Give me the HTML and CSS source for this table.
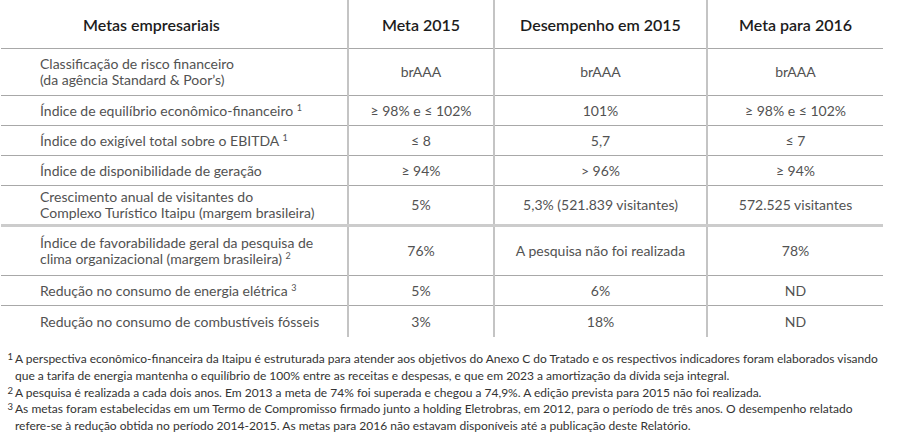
FILE: index.html
```html
<!DOCTYPE html>
<html lang="pt">
<head>
<meta charset="utf-8">
<link rel="stylesheet" href="styles.css">
</head>
<body>
<div class="page">
  <table class="goals">
    <colgroup>
      <col class="w1">
      <col class="w2">
      <col class="w3">
      <col class="w4">
    </colgroup>
    <thead>
      <tr>
        <th class="c1">Metas empresariais</th>
        <th>Meta 2015</th>
        <th>Desempenho em 2015</th>
        <th>Meta para 2016</th>
      </tr>
    </thead>
    <tbody>
      <tr class="tall">
        <td>Classificação de risco financeiro<br>(da agência Standard &amp; Poor’s)</td>
        <td>brAAA</td>
        <td>brAAA</td>
        <td>brAAA</td>
      </tr>
      <tr>
        <td>Índice de equilíbrio econômico-financeiro <sup>1</sup></td>
        <td>≥ 98% e ≤ 102%</td>
        <td>101%</td>
        <td>≥ 98% e ≤ 102%</td>
      </tr>
      <tr>
        <td>Índice do exigível total sobre o EBITDA <sup>1</sup></td>
        <td>≤ 8</td>
        <td>5,7</td>
        <td>≤ 7</td>
      </tr>
      <tr>
        <td>Índice de disponibilidade de geração</td>
        <td>≥ 94%</td>
        <td>&gt; 96%</td>
        <td>≥ 94%</td>
      </tr>
      <tr class="mid">
        <td>Crescimento anual de visitantes do<br>Complexo Turístico Itaipu (margem brasileira)</td>
        <td>5%</td>
        <td>5,3% (521.839 visitantes)</td>
        <td>572.525 visitantes</td>
      </tr>
      <tr class="tall tall2">
        <td>Índice de favorabilidade geral da pesquisa de<br>clima organizacional (margem brasileira) <sup>2</sup></td>
        <td>76%</td>
        <td>A pesquisa não foi realizada</td>
        <td>78%</td>
      </tr>
      <tr>
        <td>Redução no consumo de energia elétrica <sup>3</sup></td>
        <td>5%</td>
        <td>6%</td>
        <td>ND</td>
      </tr>
      <tr class="last">
        <td>Redução no consumo de combustíveis fósseis</td>
        <td>3%</td>
        <td>18%</td>
        <td>ND</td>
      </tr>
    </tbody>
  </table>
  <div class="notes">
    <p class="note"><span class="num">1</span><span class="txt">A perspectiva econômico-financeira da Itaipu é estruturada para atender aos objetivos do Anexo C do Tratado e os respectivos indicadores foram elaborados visando<br>que a tarifa de energia mantenha o equilíbrio de 100% entre as receitas e despesas, e que em 2023 a amortização da dívida seja integral.</span></p>
    <p class="note"><span class="num">2</span><span class="txt">A pesquisa é realizada a cada dois anos. Em 2013 a meta de 74% foi superada e chegou a 74,9%. A edição prevista para 2015 não foi realizada.</span></p>
    <p class="note"><span class="num">3</span><span class="txt">As metas foram estabelecidas em um Termo de Compromisso firmado junto a holding Eletrobras, em 2012, para o período de três anos. O desempenho relatado<br>refere-se à redução obtida no período 2014-2015. As metas para 2016 não estavam disponíveis até a publicação deste Relatório.</span></p>
  </div>
</div>
</body>
</html>
```

FILE: styles.css
```css
html, body {
  margin: 0;
  padding: 0;
  background: #ffffff;
}

body {
  font-family: "Lato", "Open Sans", sans-serif;
  color: #525252;
}

.page {
  padding: 0 0 0 1px;
}

.goals {
  border-collapse: collapse;
  width: 882px;
  table-layout: fixed;
}

.goals .w1 { width: 347px; }
.goals .w2 { width: 146px; }
.goals .w3 { width: 213px; }
.goals .w4 { width: 176px; }

.goals th,
.goals td {
  padding: 0;
  text-align: center;
  vertical-align: middle;
  white-space: nowrap;
}

.goals th {
  height: 47px;
  font-size: 16px;
  font-weight: 600;
  color: #1c1c1c;
  border-bottom: 1px solid #a8a8a8;
  padding-top: 1px;
}

.goals th.c1 {
  text-align: left;
  padding-left: 82px;
}

.goals th + th,
.goals td + td {
  border-left: 2px solid #c4c4c4;
}

.goals td {
  font-size: 14px;
  line-height: 16px;
  height: 29px;
  border-bottom: 1px solid #a8a8a8;
}

.goals td:first-child {
  text-align: left;
  padding-left: 39px;
}

.goals tr.tall td {
  height: 46px;
}

.goals tr.tall2 td {
  height: 48px;
}

.goals tr.mid td {
  height: 38px;
  border-bottom: 3px solid #cccccc;
}

.goals tr.last td {
  border-bottom: none;
  height: 31px;
}

sup {
  font-size: 9px;
  line-height: 0;
  vertical-align: 5px;
}

.notes {
  margin-top: 14px;
  font-size: 12px;
  line-height: 16.75px;
  color: #333333;
}

.note {
  margin: 0;
  display: flex;
}

.note .num {
  width: 14px;
  flex: none;
  font-size: 9.5px;
  text-align: right;
  padding-right: 2px;
  box-sizing: border-box;
  line-height: 12px;
}
```
